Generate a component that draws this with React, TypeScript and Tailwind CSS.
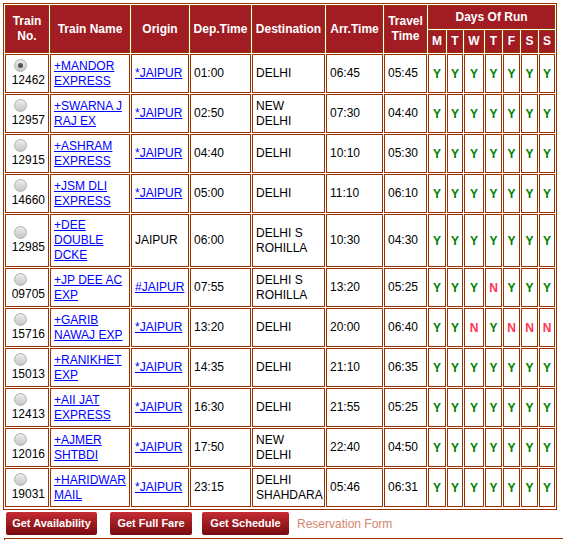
import React from "react";

type Row = {
  no: string;
  name: string[];
  origin: string;
  link: boolean;
  dep: string;
  dest: string[];
  arr: string;
  tt: string;
  days: string;
  sel?: boolean;
  tall?: boolean;
};

const rows: Row[] = [
  { no: "12462", name: ["+MANDOR", "EXPRESS"], origin: "*JAIPUR", link: true, dep: "01:00", dest: ["DELHI"], arr: "06:45", tt: "05:45", days: "YYYYYYY", sel: true },
  { no: "12957", name: ["+SWARNA J", "RAJ EX"], origin: "*JAIPUR", link: true, dep: "02:50", dest: ["NEW", "DELHI"], arr: "07:30", tt: "04:40", days: "YYYYYYY" },
  { no: "12915", name: ["+ASHRAM", "EXPRESS"], origin: "*JAIPUR", link: true, dep: "04:40", dest: ["DELHI"], arr: "10:10", tt: "05:30", days: "YYYYYYY" },
  { no: "14660", name: ["+JSM DLI", "EXPRESS"], origin: "*JAIPUR", link: true, dep: "05:00", dest: ["DELHI"], arr: "11:10", tt: "06:10", days: "YYYYYYY" },
  { no: "12985", name: ["+DEE", "DOUBLE", "DCKE"], origin: "JAIPUR", link: false, dep: "06:00", dest: ["DELHI S", "ROHILLA"], arr: "10:30", tt: "04:30", days: "YYYYYYY", tall: true },
  { no: "09705", name: ["+JP DEE AC", "EXP"], origin: "#JAIPUR", link: true, dep: "07:55", dest: ["DELHI S", "ROHILLA"], arr: "13:20", tt: "05:25", days: "YYYNYYY" },
  { no: "15716", name: ["+GARIB", "NAWAJ EXP"], origin: "*JAIPUR", link: true, dep: "13:20", dest: ["DELHI"], arr: "20:00", tt: "06:40", days: "YYNYNNN" },
  { no: "15013", name: ["+RANIKHET", "EXP"], origin: "*JAIPUR", link: true, dep: "14:35", dest: ["DELHI"], arr: "21:10", tt: "06:35", days: "YYYYYYY" },
  { no: "12413", name: ["+AII JAT", "EXPRESS"], origin: "*JAIPUR", link: true, dep: "16:30", dest: ["DELHI"], arr: "21:55", tt: "05:25", days: "YYYYYYY" },
  { no: "12016", name: ["+AJMER", "SHTBDI"], origin: "*JAIPUR", link: true, dep: "17:50", dest: ["NEW", "DELHI"], arr: "22:40", tt: "04:50", days: "YYYYYYY" },
  { no: "19031", name: ["+HARIDWAR", "MAIL"], origin: "*JAIPUR", link: true, dep: "23:15", dest: ["DELHI", "SHAHDARA"], arr: "05:46", tt: "06:31", days: "YYYYYYY" },
];

const Lines = ({ lines }: { lines: string[] }) => (
  <>
    {lines.map((l, i) => (
      <React.Fragment key={i}>
        {i > 0 && <br />}
        {l}
      </React.Fragment>
    ))}
  </>
);

const Radio = ({ sel }: { sel?: boolean }) => (
  <span className="ml-[5px] flex h-[13px] w-[13px] items-center justify-center rounded-full border border-[#b0b0b0] bg-linear-to-b from-[#ececec] to-[#c6c6c6]">
    {sel && <span className="h-[5px] w-[5px] rounded-full bg-[#555555]" />}
  </span>
);

const th = "border border-[#993300] bg-[#a11c23] text-white font-bold text-[12px] leading-[15px] text-center p-0 whitespace-nowrap";
const td = "border border-[#993300] px-[3px] py-0 text-[12px] leading-[15px] text-black whitespace-nowrap";

export default function App() {
  return (
    <div className="min-h-[540px] bg-white font-['Liberation_Sans',Arial,sans-serif]">
      <div className="pl-[3px] pt-[3px]">
        <div className="w-[554px] border border-[#993300] pb-[1px]">
          <table className="w-[552px] table-fixed border-separate border-spacing-[1px]">
            <colgroup>
              <col className="w-[44px]" />
              <col className="w-[80px]" />
              <col className="w-[58px]" />
              <col className="w-[61px]" />
              <col className="w-[73px]" />
              <col className="w-[57px]" />
              <col className="w-[43px]" />
              <col className="w-[18px]" />
              <col className="w-[16px]" />
              <col className="w-[20px]" />
              <col className="w-[17px]" />
              <col className="w-[17px]" />
              <col className="w-[17px]" />
              <col className="w-[16px]" />
            </colgroup>
            <thead>
              <tr>
                <th rowSpan={2} className={th}>Train<br />No.</th>
                <th rowSpan={2} className={th}>Train Name</th>
                <th rowSpan={2} className={th}>Origin</th>
                <th rowSpan={2} className={th}>Dep.Time</th>
                <th rowSpan={2} className={th}>Destination</th>
                <th rowSpan={2} className={th}>Arr.Time</th>
                <th rowSpan={2} className={th}>Travel<br />Time</th>
                <th colSpan={7} className={`${th} h-[24px]`}>Days Of Run</th>
              </tr>
              <tr>
                {["M", "T", "W", "T", "F", "S", "S"].map((d, i) => (
                  <th key={i} className={`${th} h-[23px]`}>{d}</th>
                ))}
              </tr>
            </thead>
            <tbody>
              {rows.map((r) => (
                <tr key={r.no}>
                  <td className={`${td} ${r.tall ? "h-[53px]" : "h-[39px]"}`}>
                    <div className="flex flex-col items-start">
                      <Radio sel={r.sel} />
                      <span className="mt-[1px] self-end">{r.no}</span>
                    </div>
                  </td>
                  <td className={td}>
                    <a href="#" className="text-[#0000ff] underline">
                      <Lines lines={r.name} />
                    </a>
                  </td>
                  <td className={td}>
                    {r.link ? (
                      <a href="#" className="text-[#0000ff] underline">{r.origin}</a>
                    ) : (
                      r.origin
                    )}
                  </td>
                  <td className={td}>{r.dep}</td>
                  <td className={td}>
                    <Lines lines={r.dest} />
                  </td>
                  <td className={td}>{r.arr}</td>
                  <td className={td}>{r.tt}</td>
                  {r.days.split("").map((d, i) => (
                    <td
                      key={i}
                      className={`border border-[#993300] p-0 text-center text-[12px] font-bold ${
                        d === "Y" ? "text-[#008000]" : "text-[#ff3355]"
                      }`}
                    >
                      {d}
                    </td>
                  ))}
                </tr>
              ))}
            </tbody>
          </table>
        </div>
      </div>
      <div className="mt-[2px] flex items-center pl-[6px]">
        <button className="h-[23px] w-[91px] rounded-[2px] bg-linear-to-b from-[#c62c33] to-[#780a0f] text-center text-[11px] font-bold text-white">
          Get Availability
        </button>
        <button className="ml-[13px] h-[23px] w-[82px] rounded-[2px] bg-linear-to-b from-[#c62c33] to-[#780a0f] text-center text-[11px] font-bold text-white">
          Get Full Fare
        </button>
        <button className="ml-[10px] h-[23px] w-[87px] rounded-[2px] bg-linear-to-b from-[#c62c33] to-[#780a0f] text-center text-[11px] font-bold text-white">
          Get Schedule
        </button>
        <span className="ml-[8px] text-[12px] text-[#d4866c]">Reservation Form</span>
      </div>
      <div className="ml-[4px] mt-[3px] h-[10px] border-l border-t border-[#993300]" />
    </div>
  );
}
